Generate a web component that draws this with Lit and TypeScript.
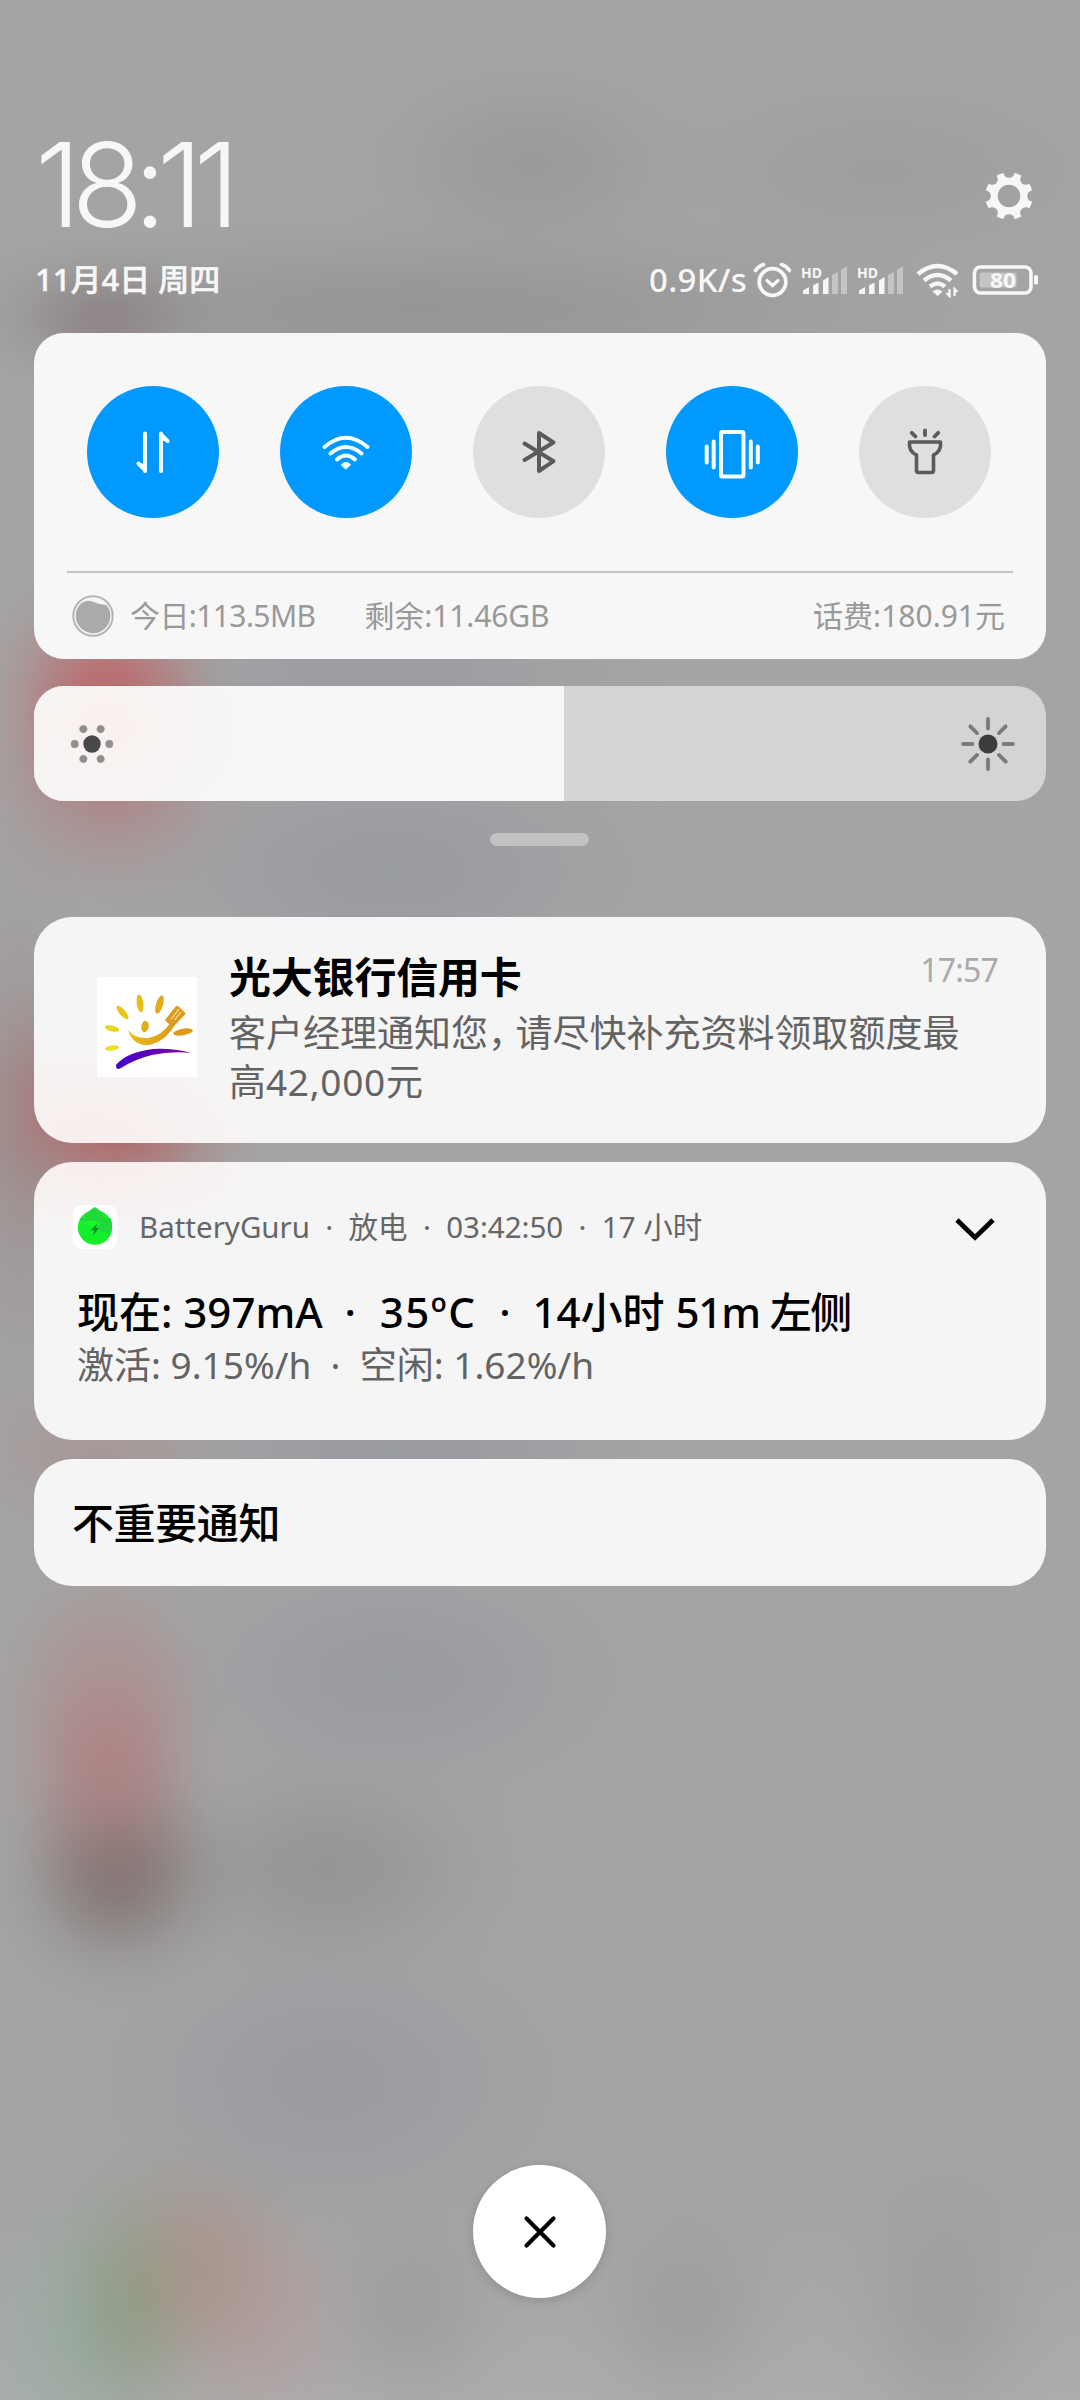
import { LitElement, css, html, svg } from "lit";
import type { SVGTemplateResult, TemplateResult } from "lit";
import { customElement, property } from "lit/decorators.js";
import { classMap } from "lit/directives/class-map.js";
import { styleMap } from "lit/directives/style-map.js";

interface Tile {
  name: string;
  on: boolean;
  icon: SVGTemplateResult;
}

const TILES: Tile[] = [
  {
    name: "data",
    on: true,
    icon: svg`
      <path d="M58 47.500V85M58 84L51.500 77.500" />
      <path d="M74 85V47.500M74 48.500L80.500 55" />
      <path d="M51 77l7 1v8zM81 55.500l-7-1v-8z" fill="currentColor" stroke="none" />`,
  },
  {
    name: "wifi",
    on: true,
    icon: svg`
      <path d="M44.500 61Q66 42.500 87.500 61M50.500 67.500Q66 54.500 81.500 67.500M57 73.500Q66 65.500 75 73.500" />
      <path d="M61.300 78.600Q66 74.500 70.700 78.600L66 83z" fill="currentColor" stroke-width="1" />`,
  },
  {
    name: "bluetooth",
    on: false,
    icon: svg`<path d="M51.500 57.500L80.500 75.200L66 85V47L80.500 56.500L51.500 74" />`,
  },
  {
    name: "vibrate",
    on: true,
    icon: svg`
      <rect x="55" y="46" width="22.500" height="44.500" rx="1.500" />
      <path d="M47.700 55.500v26M84.800 55.500v26M40.700 60.500v16M91.800 60.500v16" />`,
  },
  {
    name: "torch",
    on: false,
    icon: svg`
      <path
        d="M50.500 56H81.500Q82.500 65.500 74.500 69V84.500Q74.500 86.500 72.500 86.500H59.500Q57.500 86.500 57.500 84.500V69Q49.500 65.500 50.500 56z"
        stroke-width="3.600"
      />
      <path d="M66 44.500v4.500M52.800 46.800l3.700 3.700M79.200 46.800l-3.700 3.700" stroke-width="3.800" />`,
  },
];

// x, y, rx, ry, rgb, alpha
type Blob = [number, number, number, number, string, number];

const BLOBS: Blob[] = [
  [530, 165, 200, 120, "144,144,144", 0.5],
  [880, 170, 260, 110, "148,148,148", 0.35],
  [105, 318, 130, 80, "134,120,120", 0.6],
  [420, 310, 640, 110, "144,144,144", 0.7],
  [108, 700, 140, 150, "192,94,97", 0.8],
  [110, 790, 170, 140, "174,124,127", 0.5],
  [380, 680, 310, 130, "148,151,159", 0.55],
  [390, 870, 310, 150, "148,151,160", 0.7],
  [115, 1110, 160, 150, "178,92,95", 0.85],
  [20, 1130, 90, 330, "150,125,125", 0.45],
  [400, 1450, 310, 130, "148,151,160", 0.7],
  [100, 1455, 170, 110, "168,144,144", 0.6],
  [105, 1660, 130, 130, "172,146,146", 0.5],
  [108, 1750, 130, 180, "180,116,118", 0.65],
  [118, 1872, 135, 140, "122,110,108", 0.8],
  [325, 1868, 230, 140, "138,138,137", 0.55],
  [390, 1675, 290, 160, "148,151,160", 0.7],
  [330, 2080, 290, 190, "149,152,160", 0.7],
  [200, 2270, 130, 160, "172,136,122", 0.5],
  [130, 2305, 110, 170, "132,156,126", 0.65],
  [55, 2340, 120, 180, "148,174,162", 0.45],
  [270, 2320, 120, 160, "180,154,156", 0.5],
  [410, 2310, 130, 140, "148,148,148", 0.45],
  [685, 2310, 130, 140, "148,148,148", 0.45],
  [945, 2310, 130, 180, "148,148,148", 0.45],
];

// eased stops so the blobs fade out like a blurred wallpaper
const FALLOFF = [1, 0.88, 0.6, 0.28, 0.08, 0];

const blobGradient = ([x, y, rx, ry, rgb, alpha]: Blob) => {
  const stops = FALLOFF.map((f, i) => `rgba(${rgb},${(f * alpha).toFixed(3)}) ${i * 20}%`);
  return `radial-gradient(${rx}px ${ry}px at ${x}px ${y}px, ${stops.join(", ")})`;
};

const WALLPAPER = [
  ...BLOBS.map(blobGradient),
  "linear-gradient(transparent 2200px, #acacac 2400px)",
].join(", ");

@customElement("shade-toggle")
export class ShadeToggle extends LitElement {
  static styles = css`
    :host {
      display: block;
      width: 132px;
      height: 132px;
    }
    .disc {
      width: 132px;
      height: 132px;
      border-radius: 50%;
      background: #dfdfdf;
      color: #5a5a5a;
    }
    .on {
      background: #0099ff;
      color: #f7ffff;
    }
    svg {
      display: block;
    }
  `;

  @property({ type: Boolean })
  on: boolean = false;

  @property({ attribute: false })
  icon?: SVGTemplateResult;

  render() {
    return html`<div class="disc ${classMap({ on: this.on })}">
      <svg
        width="132"
        height="132"
        viewBox="0 0 132 132"
        fill="none"
        stroke="currentColor"
        stroke-width="4"
        stroke-linecap="round"
        stroke-linejoin="round"
      >
        ${this.icon}
      </svg>
    </div>`;
  }
}

@customElement("status-icons")
export class StatusIcons extends LitElement {
  static styles = css`
    :host {
      display: flex;
      align-items: center;
      height: 40px;
      color: #f7f7f7;
    }
    svg {
      display: block;
      fill: none;
      stroke: currentColor;
      stroke-linecap: round;
    }
    .speed {
      width: 100px;
      font: 500 33px/40px "Noto Sans", sans-serif;
      letter-spacing: 0.300px;
      white-space: nowrap;
    }
    .alarm {
      margin-left: 4px;
    }
    .signal {
      margin-left: 8px;
    }
    .signal text {
      font: 700 15px "Noto Sans", sans-serif;
      fill: currentColor;
      stroke: none;
    }
    .bars {
      fill: currentColor;
      stroke: none;
    }
    .dim {
      opacity: 0.4;
    }
    .wifi {
      margin-left: 10px;
    }
    .battery {
      margin-left: 11px;
    }
    .battery text {
      font: 700 21px "Noto Sans", sans-serif;
      fill: currentColor;
      stroke: none;
    }
  `;

  #signal() {
    return html`<svg class="signal" width="48" height="36" viewBox="0 0 48 36" overflow="visible">
      <text x="0" y="15.500" textLength="21" lengthAdjust="spacingAndGlyphs">HD</text>
      <g class="bars">
        <path d="M2 32v-3.500l6-3.500v7zM12 23.500l5.500-3v11.500h-5.500zM22 18.500l5.500-3.500v17h-5.500z" />
        <path class="dim" d="M31 13l6-3v22h-6zM40 8l6-4v28h-6z" />
      </g>
    </svg>`;
  }

  render() {
    return html`
      <span class="speed">0.9K/s</span>
      <svg class="alarm" width="40" height="36" viewBox="0 0 40 36">
        <circle cx="19.500" cy="20" r="13.300" stroke-width="3.700" />
        <path d="M14 18.500l5.500 5 5.500-5" stroke-width="3.200" />
        <path d="M2.500 8.500Q5.500 4 10.500 2.500M36.500 8.500Q33.500 4 28.500 2.500" stroke-width="3.600" />
      </svg>
      ${this.#signal()} ${this.#signal()}
      <svg class="wifi" width="46" height="36" viewBox="0 0 46 36">
        <path
          d="M3 12Q22.500-4 42 12M9 18.500Q22.500 7.500 36 18.500M15 24.500Q22.500 18.500 30 24.500"
          stroke-width="4.400"
          stroke-linecap="butt"
        />
        <path d="M17.500 29.500Q22.500 25.500 27.500 29.500L22.500 34z" class="bars" />
        <path d="M34.500 27v7l-3-3M39.500 34v-7l3 3" stroke-width="2.300" stroke-linecap="butt" />
      </svg>
      <svg class="battery" width="67" height="36" viewBox="0 0 67 36">
        <rect x="2.500" y="5" width="56.500" height="26" rx="6" stroke-width="3.600" />
        <rect x="7.500" y="10.500" width="37" height="15" rx="2" class="bars dim" />
        <rect x="62" y="13" width="4" height="9.500" rx="1.500" class="bars" />
        <text x="18" y="25.600" textLength="26" lengthAdjust="spacingAndGlyphs">80</text>
      </svg>
    `;
  }
}

@customElement("brightness-bar")
export class BrightnessBar extends LitElement {
  static styles = css`
    :host {
      display: block;
    }
    .track {
      display: grid;
      height: 115px;
      border-radius: 30px;
      overflow: hidden;
      background: #d4d4d4;
    }
    .fill,
    .ends {
      grid-area: 1 / 1;
    }
    .fill {
      background: #f6f6f6;
      background-image: radial-gradient(
        130px 110px at 70px 40px,
        rgba(250, 240, 239, 0.9),
        rgba(250, 240, 239, 0)
      );
    }
    .ends {
      display: flex;
      align-items: center;
      justify-content: space-between;
      padding: 0 28px;
    }
    svg {
      display: block;
    }
  `;

  @property({ type: Number })
  value: number = 0;

  render() {
    const rays = [0, 45, 90, 135, 180, 225, 270, 315];
    const dots = [0, 60, 120, 180, 240, 300];
    return html`<div class="track">
      <div class="fill" style=${styleMap({ width: `${this.value}%` })}></div>
      <div class="ends">
        <svg width="60" height="60" viewBox="-30 -30 60 60">
          <circle r="8.700" fill="#484848" />
          ${dots.map(
            (a) => svg`<circle cx="17.300" r="3.900" fill="#8f8f8f" transform="rotate(${a})" />`
          )}
        </svg>
        <svg width="60" height="60" viewBox="-30 -30 60 60">
          <circle r="9.500" fill="#3d3d3d" />
          ${rays.map(
            (a) => svg`<path
              d="M15.500 0H25"
              stroke="#7a7a7a"
              stroke-width="3.800"
              stroke-linecap="round"
              transform="rotate(${a})"
            />`
          )}
        </svg>
      </div>
    </div>`;
  }
}

@customElement("app-root")
export class AppRoot extends LitElement {
  static styles = css`
    :host {
      display: block;
      font-family: "Noto Sans", "Noto Sans CJK SC", sans-serif;
      color: #000;
    }
    .shade {
      box-sizing: border-box;
      display: flex;
      flex-direction: column;
      width: 1080px;
      height: 2400px;
      padding: 126px 34px 0;
      overflow: hidden;
      white-space: nowrap;
      background-color: #a4a4a4;
    }
    svg {
      display: block;
      flex: none;
    }
    .clock-row {
      display: flex;
      justify-content: space-between;
      align-items: flex-start;
      height: 134px;
      color: #f7f7f7;
    }
    .clock {
      margin-left: 1px;
      font: 300 117px/117px Inter, sans-serif;
      letter-spacing: -9.500px;
    }
    .gear {
      margin: 46px 13px 0 0;
    }
    .date-row {
      display: flex;
      justify-content: space-between;
      align-items: center;
      height: 40px;
      margin-bottom: 33px;
      padding: 0 7px 0 0;
      color: #f7f7f7;
    }
    .date {
      padding: 0 0 2px 1px;
      font-size: 31px;
      font-weight: 500;
      line-height: 38px;
      -webkit-text-stroke: 0.500px currentColor;
    }
    .card {
      box-sizing: border-box;
      flex: none;
      background: #f5f5f5;
      border-radius: 38px;
    }
    .controls {
      height: 326px;
      padding: 53px 33px 0;
      border-radius: 30px;
      background: #f7f7f7;
    }
    .tiles {
      display: flex;
      justify-content: space-between;
      padding: 0 22px 0 20px;
    }
    .usage {
      display: flex;
      align-items: center;
      height: 86px;
      margin-top: 53px;
      padding: 0 8px 0 5px;
      border-top: 2px solid #c3c3c3;
      font-size: 30px;
      line-height: 40px;
      color: #999;
    }
    .today {
      margin-left: 16px;
      letter-spacing: -0.600px;
    }
    .left {
      margin-left: 49px;
      letter-spacing: -0.100px;
    }
    .bill {
      margin-left: auto;
    }
    brightness-bar {
      margin-top: 27px;
    }
    .handle {
      flex: none;
      width: 99px;
      height: 13px;
      margin: 32px 0 71px 456px;
      border-radius: 7px;
      background: #c1c2c2;
    }
    .bank {
      display: flex;
      height: 226px;
      padding: 32px 48px 0 63px;
      background-image: radial-gradient(190px 120px at 60px 226px, #f8eeed, rgba(245, 245, 245, 0));
    }
    .bank-logo {
      margin: 28px 32px 0 0;
    }
    .bank-text {
      flex: 1;
      min-width: 0;
    }
    .title {
      font-size: 42px;
      line-height: 56px;
      font-weight: 500;
    }
    .strong {
      margin-bottom: 3px;
      font-weight: 700;
      letter-spacing: -0.200px;
    }
    .body {
      color: #636363;
      font-size: 37px;
      line-height: 49px;
    }
    .comma {
      font-feature-settings: "halt";
      margin-right: 9px;
    }
    .amount {
      letter-spacing: 0.700px;
    }
    .time {
      flex: none;
      margin-top: 1px;
      color: #aaa;
      font-size: 32px;
      line-height: 40px;
      letter-spacing: -0.800px;
    }
    .guru {
      height: 278px;
      margin-top: 19px;
      padding: 43px 50px 0 40px;
      background-image: radial-gradient(190px 80px at 70px 0, #f8eeed, rgba(245, 245, 245, 0));
    }
    .app-line {
      display: flex;
      align-items: center;
      height: 44px;
      margin: 0 0 35px -1px;
      font-size: 29.500px;
      line-height: 40px;
      color: #666;
    }
    .app-meta {
      flex: 1;
      margin-left: 22px;
    }
    .chevron {
      margin-top: 3px;
    }
    .temp {
      margin: 0 1px 0 2px;
      letter-spacing: 1.500px;
    }
    .minutes {
      letter-spacing: -1.200px;
    }
    .side {
      margin-left: -1px;
      letter-spacing: -1.500px;
    }
    .minor {
      display: flex;
      align-items: center;
      height: 127px;
      margin-top: 19px;
      padding: 0 38px;
    }
    .tight {
      letter-spacing: -0.400px;
    }
    .close {
      display: grid;
      place-items: center;
      flex: none;
      width: 133px;
      height: 133px;
      margin: 579px 0 0 439px;
      border-radius: 50%;
      background: #fff;
      box-shadow: 0 3px 12px rgba(0, 0, 0, 0.14);
    }
    .indent {
      margin-left: 3px;
    }
  `;

  #gear() {
    const notches = [0, 45, 90, 135, 180, 225, 270, 315];
    return html`<svg class="gear" width="48" height="48" viewBox="-24 -24 48 48">
      <mask id="gear-cut">
        <rect x="-24" y="-24" width="48" height="48" fill="#fff" />
        <circle r="11.300" fill="#000" />
        ${notches.map(
          (a) => svg`<ellipse cy="-23" rx="5.400" ry="4.800" fill="#000" transform="rotate(${a})" />`
        )}
      </mask>
      <circle r="23.800" fill="currentColor" mask="url(#gear-cut)" />
    </svg>`;
  }

  #bankLogo() {
    return html`<svg class="bank-logo" width="100" height="100" viewBox="0 0 100 100">
      <defs>
        <linearGradient id="sun" x1="0" x2="1">
          <stop offset="0" stop-color="#e9bd12" />
          <stop offset="1" stop-color="#dd9a1c" />
        </linearGradient>
        <linearGradient id="hill" x1="0" x2="1">
          <stop offset="0" stop-color="#4500cf" />
          <stop offset="1" stop-color="#7d0a9c" />
        </linearGradient>
      </defs>
      <rect width="100" height="100" fill="#fff" />
      <ellipse cx="15" cy="51.500" rx="7.500" ry="2.800" fill="#e8d71c" transform="rotate(14 15 51.500)" />
      <ellipse cx="15" cy="71" rx="7" ry="2.500" fill="#eadf20" transform="rotate(-7 15 71)" />
      <ellipse cx="25.500" cy="35.500" rx="8.500" ry="3" fill="#e5c718" transform="rotate(49 25.500 35.500)" />
      <ellipse cx="43" cy="26.500" rx="3.300" ry="9" fill="#e5be18" transform="rotate(-7 43 26.500)" />
      <ellipse cx="62.500" cy="27.500" rx="3.500" ry="9.500" fill="#e0ac1a" transform="rotate(17 62.500 27.500)" />
      <ellipse cx="86" cy="55" rx="10" ry="3.300" fill="#dd9a1c" transform="rotate(-10 86 55)" />
      <ellipse cx="48" cy="49.500" rx="3.700" ry="5.700" fill="#e0ae18" transform="rotate(10 48 49.500)" />
      <path d="M31 53Q38 62 51 61Q65 59 74 45L78 48Q66 67 49 68.300Q35 67 31 53z" fill="url(#sun)" />
      <path d="M68 43L79 29Q80 28.500 81.500 29.500L88 35.500Q88.500 36.500 88 37.500L77 49Q73 49 68 43z" fill="#dd9a1c" />
      <path d="M74 42.500L82 32M77.500 43L84 35" stroke="#fff" stroke-width="0.900" />
      <path d="M19 88Q30 75 56 72Q76 71 94 76Q74 74 55 78Q38 82 24 91Q19 94 19 88z" fill="url(#hill)" />
    </svg>`;
  }

  #guruLogo() {
    return html`<svg width="44" height="44" viewBox="0 0 44 44">
      <rect width="44" height="44" rx="9" fill="#fff" />
      <circle cx="22" cy="22.500" r="17.200" fill="#13ef2b" />
      <path d="M22 2Q30 7 32 14Q35 12 37.500 13Q41 21 37 28Q25 26 18 20Q11 18 6 14Q9 12 11.500 13Q14 6 22 2z" fill="#21d83c" />
      <path d="M5 20Q15 12 28 18Q24 24 12 19Q8 19 5 25z" fill="#1cf52c" />
      <path d="M24.500 18l-6.500 7.500h3.500l-1.500 5 6-7.500h-3.500z" fill="#0c8a2c" />
    </svg>`;
  }

  #usageBall() {
    return html`<svg width="42" height="42" viewBox="0 0 42 42">
      <circle cx="21" cy="21" r="19.700" fill="none" stroke="#b4b4b4" stroke-width="2" />
      <path d="M9 8.500Q14 4 22 7Q28 10 34.500 10A17.300 17.300 0 1 1 9 8.500z" fill="#aaa" />
    </svg>`;
  }

  render(): TemplateResult {
    return html`<div class="shade" style=${styleMap({ backgroundImage: WALLPAPER })}>
      <div class="clock-row">
        <div class="clock">18:11</div>
        ${this.#gear()}
      </div>
      <div class="date-row">
        <div class="date">11月4日 周四</div>
        <status-icons></status-icons>
      </div>

      <section class="card controls">
        <div class="tiles">
          ${TILES.map((t) => html`<shade-toggle ?on=${t.on} .icon=${t.icon}></shade-toggle>`)}
        </div>
        <div class="usage">
          ${this.#usageBall()}
          <span class="today">今日:113.5MB</span>
          <span class="left">剩余:11.46GB</span>
          <span class="bill">话费:180.91元</span>
        </div>
      </section>

      <brightness-bar value="52.400"></brightness-bar>
      <div class="handle"></div>

      <section class="card bank">
        ${this.#bankLogo()}
        <div class="bank-text">
          <div class="title strong">光大银行信用卡</div>
          <div class="body">客户经理通知您<span class="comma">，</span>请尽快补充资料领取额度最<br />高<span class="amount">42,000</span>元</div>
        </div>
        <div class="time">17:57</div>
      </section>

      <section class="card guru">
        <div class="app-line">
          ${this.#guruLogo()}
          <span class="app-meta">BatteryGuru &nbsp;·&nbsp; 放电 &nbsp;·&nbsp; 03:42:50 &nbsp;·&nbsp; 17 小时</span>
          <svg class="chevron" width="44" height="30" viewBox="0 0 44 30">
            <path d="M5 6l18 17.500L41 6" fill="none" stroke="#000" stroke-width="4.800" />
          </svg>
        </div>
        <div class="title indent">现在: 397mA &nbsp;·&nbsp; <span class="temp">35ºC</span> &nbsp;·&nbsp; 14小时 <span class="minutes">51m</span> <span class="side">左侧</span></div>
        <div class="body indent">激活: 9.15%/h &nbsp;·&nbsp; 空闲: 1.62%/h</div>
      </section>

      <section class="card minor">
        <div class="title tight">不重要通知</div>
      </section>

      <div class="close">
        <svg width="36" height="36" viewBox="-18 -18 36 36">
          <path d="M-13.500-13.500l27 27M13.500-13.500l-27 27" stroke="#000" stroke-width="4.200" stroke-linecap="round" />
        </svg>
      </div>
    </div>`;
  }
}

declare global {
  interface HTMLElementTagNameMap {
    "app-root": AppRoot;
    "shade-toggle": ShadeToggle;
    "status-icons": StatusIcons;
    "brightness-bar": BrightnessBar;
  }
}
